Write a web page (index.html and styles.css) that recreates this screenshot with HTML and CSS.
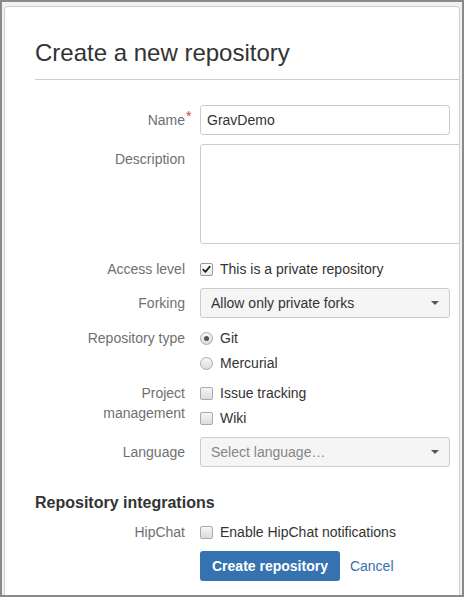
FILE: index.html
```html
<!DOCTYPE html>
<html lang="en">
<head>
<meta charset="utf-8">
<title>Create a new repository</title>
<link rel="stylesheet" href="styles.css">
</head>
<body>
<div class="frame">
  <div class="card">
    <div class="header">
      <h1 class="title">Create a new repository</h1>
    </div>
    <form class="form">
      <div class="row">
        <label class="label">Name<span class="req">*</span></label>
        <div class="field"><input class="text" type="text" value="GravDemo"></div>
      </div>
      <div class="row gap-9">
        <label class="label">Description</label>
        <div class="field"><textarea class="textarea"></textarea></div>
      </div>
      <div class="row gap-10">
        <span class="label">Access level</span>
        <div class="field options">
          <div class="option"><span class="box checked"><svg width="11" height="11" viewBox="0 0 11 11"><path d="M2.2 5.6 L4.4 7.9 L8.8 2.6" fill="none" stroke="#222" stroke-width="1.7" stroke-linecap="round" stroke-linejoin="round"/></svg></span>This is a private repository</div>
        </div>
      </div>
      <div class="row gap-9">
        <span class="label">Forking</span>
        <div class="field"><div class="select">Allow only private forks<span class="caret"></span></div></div>
      </div>
      <div class="row gap-5">
        <span class="label">Repository type</span>
        <div class="field options">
          <div class="option"><span class="box radio"><span class="dot"></span></span>Git</div>
          <div class="option"><span class="box radio"></span>Mercurial</div>
        </div>
      </div>
      <div class="row gap-5">
        <span class="label">Project<br>management</span>
        <div class="field options">
          <div class="option"><span class="box"></span>Issue tracking</div>
          <div class="option"><span class="box"></span>Wiki</div>
        </div>
      </div>
      <div class="row gap-9">
        <span class="label">Language</span>
        <div class="field"><div class="select placeholder">Select language…<span class="caret"></span></div></div>
      </div>
      <h2 class="section">Repository integrations</h2>
      <div class="row gap-4">
        <span class="label">HipChat</span>
        <div class="field options">
          <div class="option"><span class="box"></span>Enable HipChat notifications</div>
        </div>
      </div>
      <div class="row gap-9">
        <span class="label"></span>
        <div class="field actions">
          <button class="button" type="button">Create repository</button>
          <a class="cancel" href="#">Cancel</a>
        </div>
      </div>
    </form>
  </div>
</div>
</body>
</html>
```
FILE: styles.css
```css
* { box-sizing: border-box; }
html, body { margin: 0; padding: 0; background: #fff; }
body {
  font-family: "Liberation Sans", Arial, sans-serif;
  font-size: 14px;
  color: #333;
}
.frame {
  width: 464px;
  height: 597px;
  border: 2px solid #8a8a8a;
  background: #f2f2f2;
  padding: 4px 2px 0 2px;
}
.card {
  height: 100%;
  background: #fff;
  border: 1px solid #cfcfcf;
  border-bottom: none;
  border-radius: 4px 4px 0 0;
  overflow: hidden;
}
.header {
  margin-left: 30px;
  padding-top: 33px;
  padding-bottom: 13px;
  border-bottom: 1px solid #ccc;
}
.title {
  margin: 0;
  font-size: 24px;
  line-height: 26px;
  font-weight: normal;
  color: #333;
}
.form { padding: 25px 0 0 30px; }
.row { display: flex; align-items: flex-start; }
.gap-4 { margin-top: 4px; }
.gap-5 { margin-top: 5px; }
.gap-9 { margin-top: 9px; }
.gap-10 { margin-top: 10px; }
.label {
  position: relative;
  flex: none;
  width: 150px;
  margin-right: 15px;
  padding-top: 5px;
  line-height: 20px;
  text-align: right;
  color: #707070;
}
.req {
  position: absolute;
  left: 100%;
  top: 1px;
  margin-left: 1px;
  color: #d04437;
  font-size: 14px;
  line-height: 20px;
}
.field { flex: 1; min-width: 0; }
.text {
  display: block;
  width: 250px;
  height: 30px;
  border: 1px solid #ccc;
  border-radius: 3px;
  padding: 0 6px;
  font: inherit;
  color: #333;
  background: #fff;
  outline: none;
}
.textarea {
  display: block;
  width: 272px;
  height: 100px;
  border: 1px solid #ccc;
  border-radius: 3px;
  font: inherit;
  resize: none;
  background: #fff;
  outline: none;
}
.select {
  position: relative;
  width: 250px;
  height: 30px;
  border: 1px solid #ccc;
  border-radius: 3px;
  background: #f5f5f5;
  padding: 0 10px;
  line-height: 28px;
  color: #333;
}
.select.placeholder { color: #858585; }
.caret {
  position: absolute;
  right: 10px;
  top: 12px;
  width: 0;
  height: 0;
  border-left: 4px solid transparent;
  border-right: 4px solid transparent;
  border-top: 4px solid #555;
}
.options { padding-top: 5px; }
.option {
  display: flex;
  align-items: center;
  height: 20px;
  line-height: 20px;
  color: #333;
}
.option + .option { margin-top: 5px; }
.box {
  position: relative;
  flex: none;
  display: flex;
  align-items: center;
  justify-content: center;
  width: 13px;
  height: 13px;
  margin-right: 7px;
  border: 1px solid #aaa;
  border-radius: 2px;
  background: linear-gradient(#f6f6f6, #dcdcdc);
}
.box.checked { background: linear-gradient(#ffffff, #ececec); border-color: #999; }
.box.radio { border-radius: 50%; }
.dot {
  width: 5px;
  height: 5px;
  border-radius: 50%;
  background: #555;
}
.section {
  margin: 26px 0 0 0;
  font-size: 16px;
  line-height: 20px;
  font-weight: bold;
  color: #333;
}
.actions { display: flex; align-items: center; }
.button {
  height: 30px;
  padding: 0 12px;
  border: none;
  border-radius: 3px;
  background: #3572b0;
  color: #fff;
  font-family: inherit;
  font-size: 14px;
  font-weight: bold;
}
.cancel {
  margin-left: 10px;
  color: #3572b0;
  text-decoration: none;
}
```
